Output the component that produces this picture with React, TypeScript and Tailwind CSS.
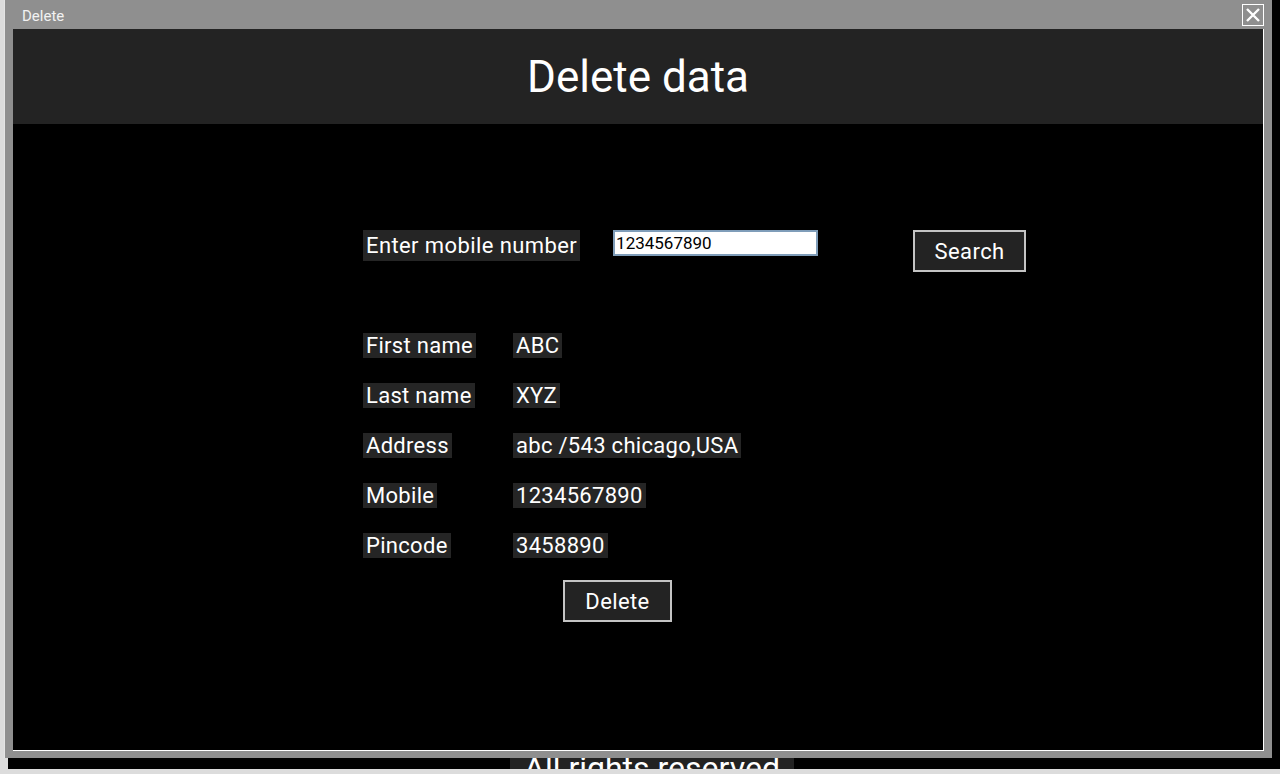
import React from "react"

const rows = [
  { label: "First name", value: "ABC" },
  { label: "Last name", value: "XYZ" },
  { label: "Address", value: "abc /543 chicago,USA" },
  { label: "Mobile", value: "1234567890" },
  { label: "Pincode", value: "3458890" },
]

const Chip = ({ children }: { children: React.ReactNode }) => (
  <span className="bg-[#252525] px-[3px] text-[22px] leading-[31px] tracking-[0.3px] text-white whitespace-nowrap">
    {children}
  </span>
)

const App: React.FC = () => {
  return (
    <div className="relative w-[1280px] h-[774px] overflow-hidden bg-[#dcdcdc] font-['Roboto',sans-serif]">
      {/* page behind the dialog */}
      <div className="ml-[8px] h-[769px] overflow-hidden bg-black flex flex-col items-center">
        <div className="mt-[748px] ml-[16px] bg-[#222] px-[14px] text-[32px] leading-[40px] text-white">
          All rights reserved
        </div>
      </div>

      {/* dialog window */}
      <div className="absolute left-[4px] top-0 w-[1268px] h-[758px] bg-[#8f8f8f] border-l border-[#e4e4e4] flex flex-col pl-[8px] pr-[8px] pb-[7px]">
        <div className="h-[29px] flex items-center justify-between">
          <span className="pl-[9px] pt-[3px] text-[15px] text-[#f2f2f2]">Delete</span>
          <button className="w-[22px] h-[22px] border border-white flex items-center justify-center">
            <svg width="16" height="16" viewBox="0 0 16 16">
              <path d="M2 2L14 14M14 2L2 14" stroke="white" strokeWidth="2.4" />
            </svg>
          </button>
        </div>

        <div className="flex-1 flex flex-col bg-black border-r border-b border-white">
          <div className="h-[95px] bg-[#232323] flex items-center justify-center">
            <h1 className="text-[44px] text-white">Delete data</h1>
          </div>

          <div className="pl-[350px] pt-[106px] flex flex-col">
            <div className="flex items-start">
              <span className="bg-[#252525] px-[3px] text-[22px] leading-[31px] tracking-[0.4px] text-white whitespace-nowrap">
                Enter mobile number
              </span>
              <input
                readOnly
                value="1234567890"
                className="ml-[33px] w-[205px] h-[26px] border-2 border-[#7f9db9] bg-white px-[1px] text-[17px] text-black outline-none"
              />
              <button className="ml-[95px] w-[113px] h-[42px] border-2 border-[#c4c4c4] bg-[#232323] text-[22px] tracking-[0.4px] text-white">
                Search
              </button>
            </div>

            <div className="mt-[58px] grid grid-cols-[150px_auto] gap-y-[19px] justify-start">
              {rows.map((r) => (
                <React.Fragment key={r.label}>
                  <div><Chip>{r.label}</Chip></div>
                  <div><Chip>{r.value}</Chip></div>
                </React.Fragment>
              ))}
            </div>

            <div className="mt-[19px] pl-[200px]">
              <button className="w-[109px] h-[42px] border-2 border-[#c4c4c4] bg-[#232323] text-[22px] tracking-[0.4px] text-white">
                Delete
              </button>
            </div>
          </div>
        </div>
      </div>
    </div>
  )
}

export default App
